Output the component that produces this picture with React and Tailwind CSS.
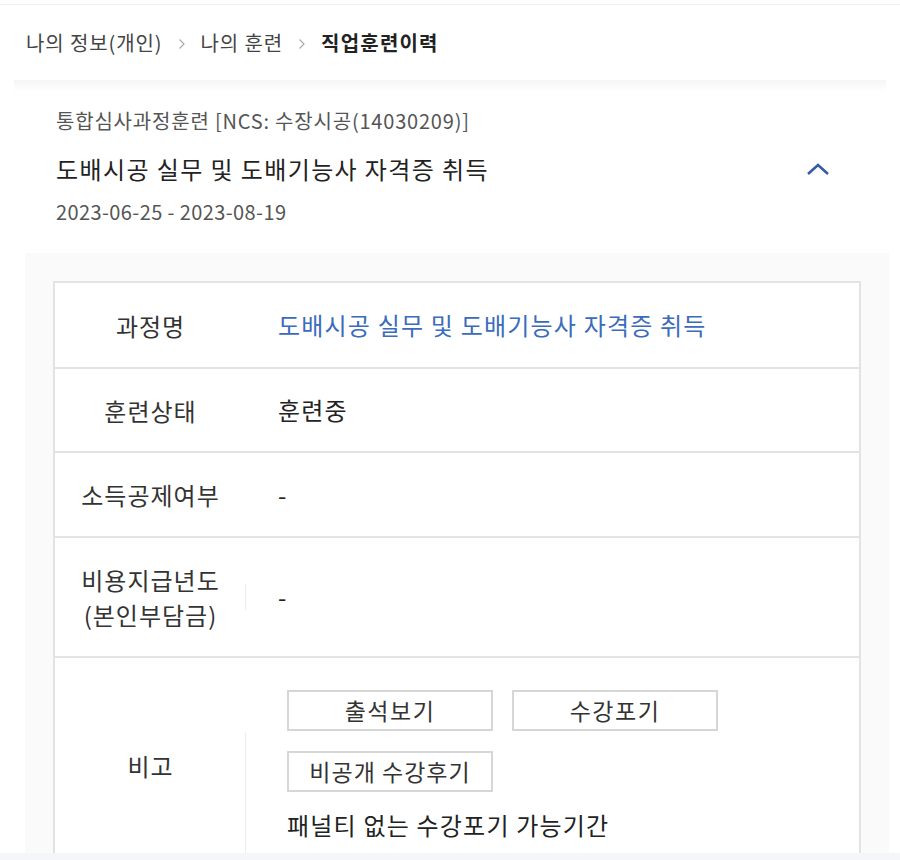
import React from 'react';

const font = { fontFamily: '"Noto Sans CJK KR", "Noto Sans", sans-serif' };

function Row({ label, children, className = '', divider = null }) {
  return (
    <div className={`flex border-t-2 border-[#e3e3e3] ${className}`}>
      <div className="w-[191px] shrink-0 flex items-center justify-center text-[24px] text-[#333] text-center leading-[35px] tracking-[1px]">
        {label}
      </div>
      {divider}
      <div className="flex-1 flex items-center pl-[32px] text-[24px] text-[#222] tracking-[1.2px]">
        {children}
      </div>
    </div>
  );
}

function Crumb() {
  return (
    <svg className="mx-[15px] mt-[2px]" width="8" height="12" viewBox="0 0 8 12" fill="none">
      <path d="M1.5 1.5 L6 6 L1.5 10.5" stroke="#aaa" strokeWidth="1.2" />
    </svg>
  );
}

export default function App() {
  return (
    <div className="w-[900px] h-[860px] overflow-hidden bg-white" style={font}>
      <div className="h-[5px] border-b border-[#eeeeee]" />
      <nav className="h-[75px] flex items-center pl-[26px] text-[20px] text-[#444] tracking-[0.9px]">
        <span>나의 정보(개인)</span>
        <Crumb />
        <span>나의 훈련</span>
        <Crumb />
        <span className="font-bold text-[#222] tracking-[1.2px]">직업훈련이력</span>
      </nav>
      <div className="h-[12px] mx-[14px] bg-gradient-to-b from-[#f6f6f6] to-white" />

      <section className="px-[56px] pt-[15px] pb-[27px] relative">
        <p className="text-[20px] text-[#555] tracking-[0.8px] leading-[28px]">
          통합심사과정훈련 [NCS: 수장시공(14030209)]
        </p>
        <h2 className="mt-[17px] text-[24px] text-[#222] tracking-[1.4px] leading-[34px]">
          도배시공 실무 및 도배기능사 자격증 취득
        </h2>
        <p className="mt-[12px] text-[20px] text-[#555] tracking-[0.4px] leading-[28px]">
          2023-06-25 - 2023-08-19
        </p>
        <button type="button" className="absolute right-[70px] top-[70px]" aria-label="접기">
          <svg width="24" height="14" viewBox="0 0 24 14" fill="none">
            <path d="M2 12 L12 3 L22 12" stroke="#3a59a8" strokeWidth="2.6" />
          </svg>
        </button>
      </section>

      <div className="ml-[25px] mr-[11px] bg-[#fafafa] pt-[28px] px-[28px]">
        <div className="border-x-2 border-[#e3e3e3] bg-white">
          <Row label="과정명" className="h-[86px]">
            <span className="text-[#3a6bbd]">도배시공 실무 및 도배기능사 자격증 취득</span>
          </Row>
          <Row label="훈련상태" className="h-[84px]">
            훈련중
          </Row>
          <Row label="소득공제여부" className="h-[85px]">
            -
          </Row>
          <Row
            label={<span>비용지급년도<br />(본인부담금)</span>}
            className="h-[120px]"
            divider={<div className="w-px h-[26px] self-center bg-[#ececec] -ml-px" />}
          >
            -
          </Row>
          <div className="flex border-t-2 border-[#e3e3e3] h-[197px]">
            <div className="w-[191px] shrink-0 flex items-center justify-center text-[24px] text-[#333] tracking-[1px] pt-[20px]">
              비고
            </div>
            <div className="w-px h-[121px] self-end bg-[#ececec] -ml-px" />
            <div className="flex-1 pl-[41px] pt-[32px]">
              <div className="flex gap-[19px]">
                <button type="button" className="w-[206px] h-[41px] border-2 border-[#d6d6d6] text-[23px] leading-none text-[#333] tracking-[1.5px]">
                  출석보기
                </button>
                <button type="button" className="w-[206px] h-[41px] border-2 border-[#d6d6d6] text-[23px] leading-none text-[#333] tracking-[1.5px]">
                  수강포기
                </button>
              </div>
              <button type="button" className="mt-[20px] w-[206px] h-[41px] border-2 border-[#d6d6d6] text-[23px] leading-none text-[#333] tracking-[1px]">
                비공개 수강후기
              </button>
              <p className="mt-[18px] text-[24px] text-[#222] tracking-[1.2px] leading-[30px]">
                패널티 없는 수강포기 가능기간
              </p>
            </div>
          </div>
        </div>
      </div>
      <div className="h-[20px] bg-[#f4f6fa]" />
    </div>
  );
}
